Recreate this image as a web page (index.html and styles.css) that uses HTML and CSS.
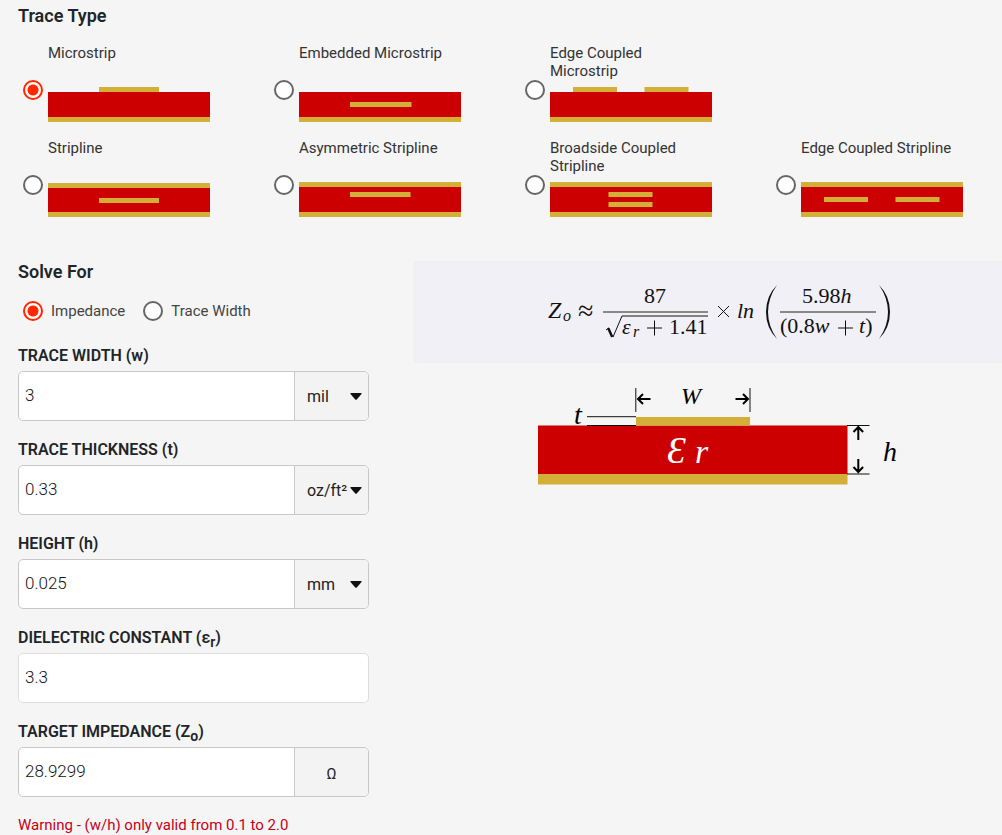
FILE: index.html
```html
<!DOCTYPE html>
<html lang="en">
<head>
<meta charset="utf-8">
<title>Trace Impedance Calculator</title>
<link rel="stylesheet" href="styles.css">
</head>
<body>
<main class="page">
  <h2 class="heading">Trace Type</h2>
  <div class="types">
    <label class="type"><input class="radio" type="radio" name="type" checked>
      <span class="type-body"><span class="type-name">Microstrip</span>
      <svg class="stack" viewBox="0 0 162 40"><path class="gold" d="M51 5h60v5H51zM0 35h162v5H0z"/><path class="red" d="M0 10h162v25H0z"/></svg></span></label>
    <label class="type"><input class="radio" type="radio" name="type">
      <span class="type-body"><span class="type-name">Embedded Microstrip</span>
      <svg class="stack" viewBox="0 0 162 40"><path class="red" d="M0 10h162v25H0z"/><path class="gold" d="M51 20h61.5v5H51zM0 35h162v5H0z"/></svg></span></label>
    <label class="type"><input class="radio" type="radio" name="type">
      <span class="type-body"><span class="type-name">Edge Coupled Microstrip</span>
      <svg class="stack" viewBox="0 0 162 40"><path class="red" d="M0 10h162v25H0z"/><path class="gold" d="M23 5h44v5H23zM94.5 5h44v5h-44zM0 35h162v5H0z"/></svg></span></label>
    <label class="type row-start"><input class="radio" type="radio" name="type">
      <span class="type-body"><span class="type-name">Stripline</span>
      <svg class="stack" viewBox="0 0 162 40"><path class="red" d="M0 11h162v24H0z"/><path class="gold" d="M0 6h162v5H0zM51 21h60v5H51zM0 35h162v5H0z"/></svg></span></label>
    <label class="type"><input class="radio" type="radio" name="type">
      <span class="type-body"><span class="type-name">Asymmetric Stripline</span>
      <svg class="stack" viewBox="0 0 162 40"><path class="red" d="M0 10h162v25H0z"/><path class="gold" d="M0 5h162v5H0zM51 15h60.5v5H51zM0 35h162v5H0z"/></svg></span></label>
    <label class="type"><input class="radio" type="radio" name="type">
      <span class="type-body"><span class="type-name">Broadside Coupled Stripline</span>
      <svg class="stack" viewBox="0 0 162 40"><path class="red" d="M0 10h162v25H0z"/><path class="gold" d="M0 5h162v5H0zM58.500 15h44v5h-44zM58.500 25h44v5h-44zM0 35h162v5H0z"/></svg></span></label>
    <label class="type"><input class="radio" type="radio" name="type">
      <span class="type-body"><span class="type-name">Edge Coupled Stripline</span>
      <svg class="stack" viewBox="0 0 162 40"><path class="red" d="M0 10h162v25H0z"/><path class="gold" d="M0 5h162v5H0zM23 20h44v5H23zM94.5 20h44v5h-44zM0 35h162v5H0z"/></svg></span></label>
  </div>

  <div class="columns">
    <form class="form">
      <h2 class="heading">Solve For</h2>
      <div class="solve">
        <label class="choice"><input class="radio" type="radio" name="solve" checked>Impedance</label>
        <label class="choice"><input class="radio" type="radio" name="solve">Trace Width</label>
      </div>

      <div class="field">
        <label class="label" for="w">TRACE WIDTH (w)</label>
        <div class="group">
          <input class="value" id="w" type="text" value="3">
          <span class="unit"><select class="select" aria-label="Trace width unit"><option>mil</option><option>mm</option></select><svg class="caret" viewBox="0 0 12 7"><path d="M1 0h10q1 0 .5 1L7 6.300q-1 1-2 0L.5 1Q0 0 1 0z"/></svg></span>
        </div>
      </div>
      <div class="field">
        <label class="label" for="t">TRACE THICKNESS (t)</label>
        <div class="group">
          <input class="value" id="t" type="text" value="0.33">
          <span class="unit"><select class="select" aria-label="Trace thickness unit"><option>oz/ft²</option><option>mil</option></select><svg class="caret" viewBox="0 0 12 7"><path d="M1 0h10q1 0 .5 1L7 6.300q-1 1-2 0L.5 1Q0 0 1 0z"/></svg></span>
        </div>
      </div>
      <div class="field">
        <label class="label" for="h">HEIGHT (h)</label>
        <div class="group">
          <input class="value" id="h" type="text" value="0.025">
          <span class="unit"><select class="select" aria-label="Height unit"><option>mm</option><option>mil</option></select><svg class="caret" viewBox="0 0 12 7"><path d="M1 0h10q1 0 .5 1L7 6.300q-1 1-2 0L.5 1Q0 0 1 0z"/></svg></span>
        </div>
      </div>
      <div class="field">
        <label class="label" for="er">DIELECTRIC CONSTANT (ε<sub>r</sub>)</label>
        <div class="group plain"><input class="value" id="er" type="text" value="3.3"></div>
      </div>
      <div class="field">
        <label class="label" for="z">TARGET IMPEDANCE (Z<sub>o</sub>)</label>
        <div class="group">
          <input class="value" id="z" type="text" value="28.9299">
          <span class="unit ohm">Ω</span>
        </div>
      </div>
      <p class="warning">Warning - (w/h) only valid from 0.1 to 2.0</p>
    </form>

    <section class="result">
      <div class="formula">
        <svg class="math" viewBox="538 282 362 60" role="img" aria-label="Impedance formula">
          <text class="it z" x="547" y="318">Z</text><text class="it small" x="562" y="321">o</text>
          <text class="sym" x="577" y="320">≈</text>
          <text x="643" y="303">87</text>
          <path class="bar" d="M602 312h105"/>
          <path class="root" d="M605 330l3-2 4 9 9-21h86"/><path class="root thick" d="M607 328l4 9"/>
          <text class="it" x="621" y="334">ε</text><text class="it small" x="632" y="337">r</text>
          <path class="thin" d="M646 328h15M653.500 320.500v15"/>
          <text x="668" y="334">1.41</text>
          <path class="thin" d="M717 306l11 11M728 306l-11 11"/>
          <text class="it" x="736" y="318">ln</text>
          <path d="M776 285Q765 296 765 312T776 339Q767 326 767 312T776 285z"/>
          <text x="801" y="303">5.98<tspan class="it">h</tspan></text>
          <path class="bar" d="M779 312h96"/>
          <text x="779" y="333">(0.8<tspan class="it">w</tspan></text>
          <path class="thin" d="M837 328h15M844.500 320.500v15"/>
          <text x="858" y="333"><tspan class="it">t</tspan>)</text>
          <path d="M878 285Q889 296 889 312T878 339Q887 326 887 312T878 285z"/>
        </svg>
      </div>
      <svg class="diagram" viewBox="538 384 362 104" role="img" aria-label="Microstrip cross-section">
        <path class="red" d="M538 425.500h309.500V474H538z"/>
        <path class="gold" d="M636 417h114v8.500H636zM538 474h309.500v10.500H538z"/>
        <path class="line" d="M587 416.700h49M587 425.500h49M847 425.500h22.500M847 474h22.500M635.800 388v24M750 388v24"/>
        <path class="arrow" d="M650.500 399H638M643 394l-5 5 5 5M735.500 399H748M743 394l5 5-5 5M858.300 440v-13M853.500 432l4.800-5 4.800 5M858.300 459v13M853.500 467l4.800 5 4.800-5"/>
        <text class="it mark" x="574" y="424">t</text>
        <text class="it w" x="681" y="404">W</text>
        <text class="it mark" x="883" y="461">h</text>
        <text class="it eps" x="667" y="463">Ɛ</text>
        <text class="it er" x="695" y="463">r</text>
      </svg>
    </section>
  </div>
</main>
</body>
</html>
```
FILE: styles.css
```css
* { box-sizing: border-box; }
body {
  margin: 0;
  background: #f5f5f5;
  color: #212529;
  font-family: Roboto, "Liberation Sans", sans-serif;
  font-size: 15px;
}
.page { padding: 5px 0 0 18px; }
.heading { margin: 0; font-size: 18px; line-height: 22px; font-weight: 600; }

.types {
  display: grid;
  grid-template-columns: repeat(3, minmax(0, 251px)) 1fr;
  row-gap: 17px;
  margin-top: 17px;
}
.type { display: flex; gap: 5px; padding-left: 5px; color: #333; }
.type .radio { margin-top: 36px; }
.row-start { grid-column-start: 1; }
.type-body { display: flex; flex-direction: column; gap: 2px; width: 162px; }
.type-name { min-height: 36px; line-height: 18px; }
.stack { display: block; width: 100%; }
.red { fill: #c00; }
.gold { fill: #d4af37; }

.radio {
  appearance: none;
  flex: none;
  width: 20px;
  height: 20px;
  margin: 0;
  border: 2px solid #666;
  border-radius: 50%;
  background: #fff;
}
.radio:checked {
  border-color: #ff2600;
  background: radial-gradient(circle, #ff2600 0 5px, #fff 6px);
}

.columns { display: flex; gap: 45px; margin-top: 44px; }
.form { flex: 0 0 351px; }
.solve { display: flex; gap: 18px; margin: 18px 0 23px; padding-left: 5px; }
.choice { display: flex; gap: 8px; line-height: 20px; color: #444; }

.field { margin-bottom: 17px; }
.label { display: block; margin-bottom: 3px; font-size: 16px; line-height: 24px; font-weight: 600; }
.label sub { font-size: 14px; line-height: 0; }
.group {
  display: flex;
  height: 50px;
  border: 1px solid #c8c8c8;
  border-radius: 5px;
  background: #fff;
  overflow: hidden;
}
.plain { border-color: #ddd; }
.value {
  flex: 1;
  min-width: 0;
  padding: 0 6px 2px;
  border: 0;
  background: none;
  color: #111;
  font: 300 17px Roboto, sans-serif;
}
.unit {
  display: grid;
  flex: 0 0 74px;
  align-items: center;
  border-left: 1px solid #c8c8c8;
  background: #f3f3f3;
}
.select {
  grid-area: 1 / 1;
  appearance: none;
  height: 48px;
  padding: 0 0 0 12px;
  border: 0;
  background: none;
  color: #222;
  font: 16px Roboto, sans-serif;
}
.caret { grid-area: 1 / 1; justify-self: end; width: 12px; margin-right: 6px; fill: #111; pointer-events: none; }
.ohm { justify-items: center; padding-top: 4px; }
.warning { margin: 18px 0 0; line-height: 20px; color: #c5001a; }

.result { flex: 1; min-width: 0; }
.formula {
  padding: 20px 0 20px 22px;
  border: 1px solid #ededed;
  border-right: 0;
  border-radius: 5px 0 0 5px;
  background: #f1f0f6;
}
.math { display: block; width: 362px; margin: 0 auto; font: 22px "Liberation Serif", serif; fill: #111; }
.it { font-style: italic; }
.z { font-size: 24px; }
.small { font-size: 16px; }
.sym { font-size: 28px; }
.bar { stroke: #888; stroke-width: 2; }
.root, .thin { fill: none; stroke: #111; }
.thick { stroke-width: 2; }
.result .diagram { display: block; width: 384px; margin: 21px auto 0; padding-left: 22px; overflow: visible; font-family: "Liberation Serif", serif; }
.line { stroke: #111; }
.arrow { fill: none; stroke: #000; stroke-width: 2; }
.mark { font-size: 28px; }
.w { font-size: 24px; }
.eps { font-size: 38px; fill: #fff; }
.er { font-size: 34px; fill: #fff; }
```
